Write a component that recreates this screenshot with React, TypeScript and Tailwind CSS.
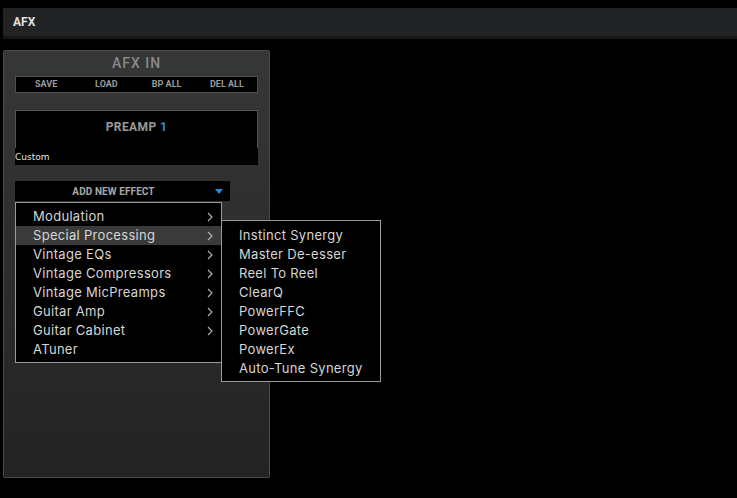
import React from "react";

const mainItems = [
  { label: "Modulation", sub: true },
  { label: "Special Processing", sub: true, active: true },
  { label: "Vintage EQs", sub: true },
  { label: "Vintage Compressors", sub: true },
  { label: "Vintage MicPreamps", sub: true },
  { label: "Guitar Amp", sub: true },
  { label: "Guitar Cabinet", sub: true },
  { label: "ATuner", sub: false },
];

const subItems = [
  "Instinct Synergy",
  "Master De-esser",
  "Reel To Reel",
  "ClearQ",
  "PowerFFC",
  "PowerGate",
  "PowerEx",
  "Auto-Tune Synergy",
];

function Chevron() {
  return (
    <svg width="6" height="10" viewBox="0 0 6 10" className="text-[#b5b5b5]">
      <path d="M1 1 L5 5 L1 9" fill="none" stroke="currentColor" strokeWidth="1.1" />
    </svg>
  );
}

export default function App() {
  return (
    <div className="relative w-[737px] h-[498px] bg-black overflow-hidden font-['Roboto',sans-serif]">
      <div className="pt-[8px] pl-[3px]">
        <div className="h-[28px] bg-[#222324] flex items-center pl-[10px]">
          <span className="text-[12px] font-bold text-[#e0e0e0]">AFX</span>
        </div>
        <div className="h-[3px] bg-[#161718]" />
      </div>

      <div className="ml-[3px] mt-[11px] w-[267px] h-[428px] rounded-[2px] border border-[#4a4a4a] bg-gradient-to-b from-[#363738] to-[#232323] px-[11px]">
        <div className="h-[25px] flex items-center justify-center">
          <span className="text-[14px] tracking-[1px] font-medium text-[#8a8a8a]">AFX IN</span>
        </div>
        <div className="h-[17px] bg-black border border-[#505050] grid grid-cols-4 items-center">
          {["SAVE", "LOAD", "BP ALL", "DEL ALL"].map((t) => (
            <span key={t} className="text-center text-[9px] font-bold text-[#9a9a9a] leading-none">
              {t}
            </span>
          ))}
        </div>

        <div className="mt-[17px] h-[38px] bg-black border-t border-l border-r border-[#555555] flex items-center justify-center pb-[6px]">
          <span className="text-[12px] font-bold text-[#9a9a9a] tracking-[0.4px]">
            PREAMP <span className="text-[#2a8fd8]">1</span>
          </span>
        </div>
        <div className="h-[17px] bg-black flex items-center pt-[2px]">
          <span className="text-[9px] text-[#e6e6e6] font-['DejaVu_Sans',sans-serif] leading-none">Custom</span>
        </div>

        <div className="mt-[16px] w-[215px] h-[20px] bg-black relative flex items-center justify-center pt-[1px] pr-[18px]">
          <span className="text-[10px] font-bold text-[#a8a8a8] tracking-[0.1px]">ADD NEW EFFECT</span>
          <svg width="8" height="5" viewBox="0 0 8 5" className="absolute left-[200px] top-[8px]">
            <path d="M0 0 H8 L4 5 Z" fill="#1e8fd6" />
          </svg>
        </div>
      </div>

      <div className="absolute left-[15px] top-[202px] w-[207px] border border-[#9a9a9a] bg-black pt-[4px] pb-[3px] font-['Inter',sans-serif]">
        {mainItems.map((it) => (
          <div
            key={it.label}
            className={`h-[19px] flex items-center justify-between pl-[17px] pr-[8px] ${it.active ? "bg-[#3a3a3b]" : ""}`}
          >
            <span className="text-[13px] text-[#d6d6d6] leading-none tracking-[0.3px]">{it.label}</span>
            {it.sub && <Chevron />}
          </div>
        ))}
      </div>

      <div className="absolute left-[221px] top-[220px] w-[160px] border border-[#9a9a9a] bg-black pt-[5px] pb-[3px] font-['Inter',sans-serif]">
        {subItems.map((s) => (
          <div key={s} className="h-[19px] flex items-center pl-[17px]">
            <span className="text-[13px] text-[#d6d6d6] leading-none tracking-[0.3px]">{s}</span>
          </div>
        ))}
      </div>
    </div>
  );
}
